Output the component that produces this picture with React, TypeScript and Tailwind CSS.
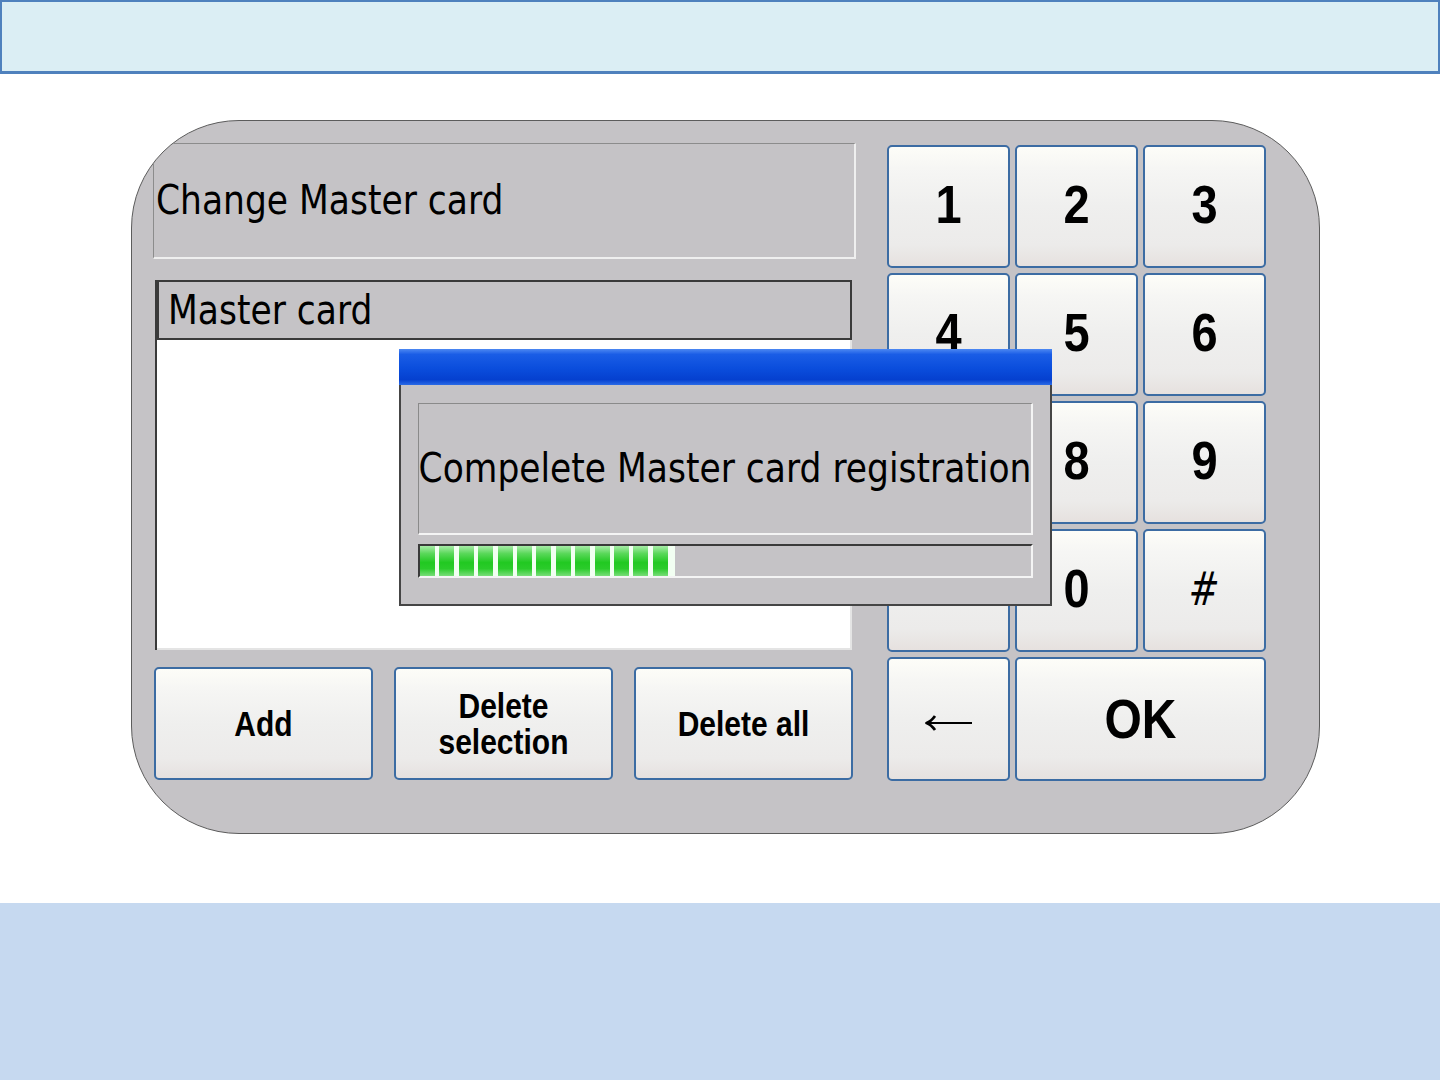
const ui = { fontFamily: '"DejaVu Sans", Verdana, sans-serif' };
const btnFont = { fontFamily: '"Liberation Sans", Arial, sans-serif' };

const keyFace =
    "flex items-center justify-center rounded-[5px] border-2 border-[#3c6ca3] bg-[linear-gradient(to_bottom,#fdfdf8_0%,#f6f6f4_18%,#efefee_50%,#ecebea_82%,#e6e1df_100%)] text-black";

function Key({ children, className = "" }: { children: React.ReactNode; className?: string }) {
    return <div className={`${keyFace} ${className}`}>{children}</div>;
}

function Digit({ d }: { d: string }) {
    return (
        <Key className="pb-[6px]">
            <span className="inline-block scale-y-[1.16] text-[47px] font-bold leading-none" style={btnFont}>
                {d}
            </span>
        </Key>
    );
}

function ActionButton({ lines }: { lines: string[] }) {
    return (
        <Key className="h-[113px] w-[219px] flex-col">
            {lines.map((l) => (
                <span
                    key={l}
                    className="inline-block scale-y-[1.16] text-[30px] font-bold leading-[36px]"
                    style={btnFont}
                >
                    {l}
                </span>
            ))}
        </Key>
    );
}

function ProgressDialog() {
    const segs = Array.from({ length: 13 });
    return (
        <div className="absolute left-[267px] top-[228px] flex h-[257px] w-[653px] flex-col" style={ui}>
            <div className="h-[36px] bg-[linear-gradient(to_bottom,#4d88f2_0%,#1a5de6_15%,#0a4ddc_55%,#0540cf_85%,#2a6ae6_100%)]" />
            <div className="flex flex-1 flex-col border-2 border-t-0 border-[#454545] bg-[#c5c3c6] px-[17px] pt-[18px]">
                <div className="flex h-[132px] items-center justify-center overflow-hidden whitespace-nowrap border border-b-2 border-r-2 border-[#8a8a8a] border-b-[#f4f4f4] border-r-[#f4f4f4]">
                    <span className="inline-block scale-y-[1.16] text-[34.5px] leading-none text-black">
                        Compelete Master card registration
                    </span>
                </div>
                <div className="mt-[9px] flex h-[34px] border-2 border-[#3a3a3a] border-b-[#f4f4f4] border-r-[#f4f4f4] bg-[#c5c3c6]">
                    <div className="flex bg-[#f2fff2] pr-[3px]">
                        {segs.map((_, i) => (
                            <div
                                key={i}
                                className="mr-[4.4px] h-full w-[15px] bg-[linear-gradient(to_bottom,#a8eca8_0%,#5ad85a_25%,#22c922_55%,#2acb2a_75%,#78dd78_100%)]"
                            />
                        ))}
                    </div>
                </div>
            </div>
        </div>
    );
}

export default function App() {
    return (
        <div className="flex h-[1080px] w-[1440px] flex-col bg-white">
            <div className="h-[74px] border-2 border-b-[3px] border-[#4f81bd] bg-[#dbeef4]" />

            <div className="h-[829px] pl-[131px] pt-[46px]">
                <div className="relative flex h-[714px] w-[1189px] overflow-hidden rounded-[108px] border border-[#5c5c5c] bg-[#c5c3c6] pl-[21px] pt-[22px]">
                    {/* left column */}
                    <div className="flex w-[703px] flex-col" style={ui}>
                        <div className="flex h-[116px] items-center border-[1.5px] border-b-2 border-r-2 border-[#8c8c8c] border-b-[#efefef] border-r-[#efefef] pl-[2px]">
                            <span className="inline-block scale-y-[1.16] text-[34.5px] leading-none text-black">
                                Change Master card
                            </span>
                        </div>

                        <div className="ml-[2px] mt-[21px] flex h-[370px] w-[697px] flex-col border-l-2 border-[#3a3a3a]">
                            <div className="flex h-[60px] w-[695px] items-center border-2 border-[#3a3a3a] pl-[9px]">
                                <span className="inline-block scale-y-[1.16] text-[34.5px] leading-none text-black">
                                    Master card
                                </span>
                            </div>
                            <div className="flex-1 border-b-2 border-r-2 border-[#e4e4e4] bg-white" />
                        </div>

                        <div className="ml-[1px] mt-[17px] flex gap-[21px]">
                            <ActionButton lines={["Add"]} />
                            <ActionButton lines={["Delete", "selection"]} />
                            <ActionButton lines={["Delete all"]} />
                        </div>
                    </div>

                    {/* keypad */}
                    <div className="ml-[31px] mt-[2px] grid h-[636px] w-[379px] grid-cols-[123px_123px_123px] grid-rows-[123px_123px_123px_123px_124px] gap-[5px]">
                        {["1", "2", "3", "4", "5", "6", "7", "8", "9"].map((d) => (
                            <Digit key={d} d={d} />
                        ))}
                        <Digit d="" />
                        <Digit d="0" />
                        <Key className="pb-[4px]">
                            <span className="inline-block -skew-x-6 scale-y-[1.3] text-[36px] leading-none" style={ui}>
                                #
                            </span>
                        </Key>
                        <Key className="pt-[8px]">
                            <svg width="50" height="18" viewBox="0 0 50 18" fill="none" aria-label="back">
                                <path d="M48 9H4" stroke="#000" strokeWidth="2.2" />
                                <path d="M11 2Q7 7.5 2.5 9Q7 10.5 11 16" stroke="#000" strokeWidth="2.8" strokeLinejoin="round" />
                            </svg>
                        </Key>
                        <Key className="col-span-2">
                            <span className="inline-block scale-y-[1.16] text-[48px] font-bold leading-none" style={btnFont}>
                                OK
                            </span>
                        </Key>
                    </div>

                    <ProgressDialog />
                </div>
            </div>

            <div className="h-[177px] bg-[#c6d9f0]" />
        </div>
    );
}
